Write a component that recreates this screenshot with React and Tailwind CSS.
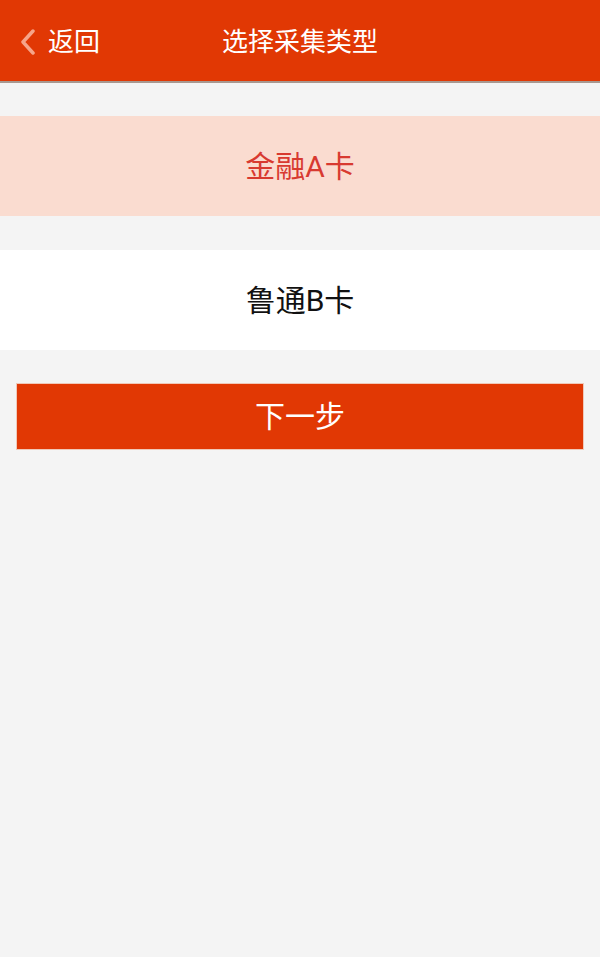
import { useState } from 'react';

const cards = [
  { id: 'a', label: '金融A卡' },
  { id: 'b', label: '鲁通B卡' },
];

const font = { fontFamily: 'Roboto, "Noto Sans CJK SC", "Noto Sans", sans-serif' };

export default function App() {
  const [selected, setSelected] = useState('a');

  return (
    <div className="min-h-[957px] w-full bg-[#f4f4f4]" style={font}>
      {/* top bar */}
      <header className="relative flex h-[83px] items-center justify-center border-b-2 border-[#a89890] bg-[#e13804] pt-[3px]">
        <button className="absolute left-[20px] top-0 flex h-full items-center gap-[12px] pt-[3px] text-white">
          <svg width="16" height="26" viewBox="0 0 16 26" fill="none">
            <path d="M13 2 L3 13 L13 24" stroke="#f6a58a" strokeWidth="3.5" strokeLinecap="round" strokeLinejoin="round" />
          </svg>
          <span className="text-[26px] leading-none">返回</span>
        </button>
        <h1 className="text-[26px] leading-none text-white">选择采集类型</h1>
      </header>

      {/* card type list */}
      <div className="flex flex-col gap-[34px] pt-[33px]">
        {cards.map((c) => (
          <button
            key={c.id}
            onClick={() => setSelected(c.id)}
            className={
              c.id === selected
                ? 'flex h-[100px] w-full items-center justify-center bg-[#fadcd0] text-[30px] text-[#d83a30]'
                : 'flex h-[100px] w-full items-center justify-center bg-white text-[30px] text-[#111111]'
            }
          >
            {c.label}
          </button>
        ))}
      </div>

      <div className="px-[16px] pt-[33px]">
        <button className="flex h-[67px] w-full items-center justify-center border border-[#f0c8b8] bg-[#e13804] text-[30px] text-white">
          下一步
        </button>
      </div>
    </div>
  );
}
